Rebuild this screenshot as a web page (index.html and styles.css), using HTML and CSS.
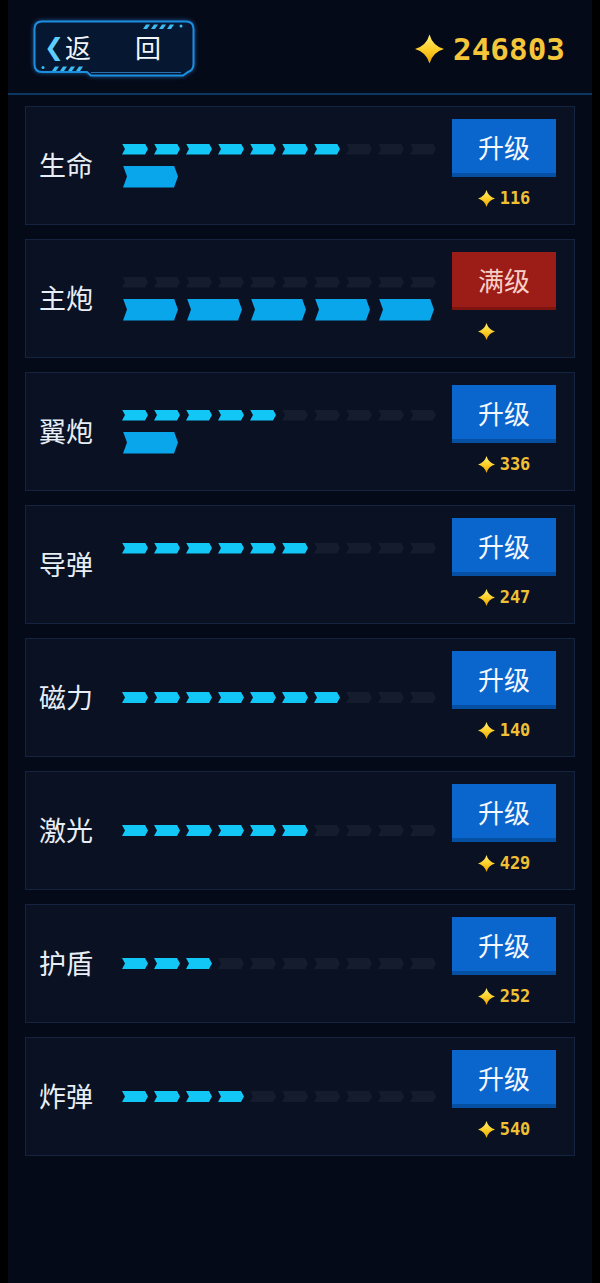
FILE: index.html
```html
<!DOCTYPE html>
<html lang="zh-CN">
  <head>
    <meta charset="UTF-8" />
    <meta name="viewport" content="width=device-width, initial-scale=1.0" />
    <title>强化</title>
    <link rel="stylesheet" href="styles.css">
  </head>
  <body>
    <svg class="defs" width="0" height="0">
      <defs>
        <linearGradient id="gold" x1="0" y1="0" x2="0" y2="1">
          <stop offset="0" stop-color="#fff07a" />
          <stop offset="0.5" stop-color="#ffd02a" />
          <stop offset="1" stop-color="#e9a300" />
        </linearGradient>
        <symbol id="star" viewBox="0 0 24 24">
          <path d="M12 0 Q14.6 9.4 24 12 Q14.6 14.6 12 24 Q9.4 14.6 0 12 Q9.4 9.4 12 0Z" fill="url(#gold)" />
        </symbol>
      </defs>
    </svg>

    <div class="screen">
      <header class="topbar">
        <a class="back-btn" href="#">
          <svg class="back-frame" viewBox="0 0 162 57">
            <path d="M9 1.5 H153 Q160.5 1.5 160.5 9 V44 Q160.5 50 155 52 L150 55.5 H58 L54 52 H9 Q1.5 52 1.5 44 V9 Q1.5 1.5 9 1.5 Z" fill="#061732" stroke="#1b8ee0" stroke-width="2" />
            <path d="M58 52.5 H148" stroke="#2a6fb0" stroke-width="1" />
            <path d="M110 9 l3 -4.5 h4 l-3 4.5z M118 9 l3 -4.5 h4 l-3 4.5z M126 9 l3 -4.5 h4 l-3 4.5z M134 9 l3 -4.5 h4 l-3 4.5z" fill="#3cbcf2" />
            <circle cx="148" cy="6" r="1.5" fill="#3cbcf2" />
            <path d="M19 51 l3 -4.5 h4 l-3 4.5z M27 51 l3 -4.5 h4 l-3 4.5z M35 51 l3 -4.5 h4 l-3 4.5z M43 51 l3 -4.5 h4 l-3 4.5z" fill="#3cbcf2" />
            <circle cx="10" cy="47.5" r="1.5" fill="#3cbcf2" />
          </svg>
          <span class="back-arrow">❮</span>
          <span class="back-text">返</span>
          <span class="back-text back-gap">回</span>
        </a>
        <div class="coins">
          <svg class="star-lg"><use href="#star" /></svg>
          <span>246803</span>
        </div>
      </header>

      <main class="upgrade-list">
        <section class="card">
          <div class="card-name">生命</div>
          <div class="bars">
            <div class="bar-row">
              <i class="seg on"></i><i class="seg on"></i><i class="seg on"></i><i class="seg on"></i><i class="seg on"></i><i class="seg on"></i><i class="seg on"></i><i class="seg"></i><i class="seg"></i><i class="seg"></i>
            </div>
            <div class="bar-row big-row">
              <i class="big-seg"></i>
            </div>
          </div>
          <div class="action">
            <button class="btn">升级</button>
            <div class="cost"><svg class="star-sm"><use href="#star" /></svg><span>116</span></div>
          </div>
        </section>

        <section class="card">
          <div class="card-name">主炮</div>
          <div class="bars">
            <div class="bar-row">
              <i class="seg"></i><i class="seg"></i><i class="seg"></i><i class="seg"></i><i class="seg"></i><i class="seg"></i><i class="seg"></i><i class="seg"></i><i class="seg"></i><i class="seg"></i>
            </div>
            <div class="bar-row big-row">
              <i class="big-seg"></i><i class="big-seg"></i><i class="big-seg"></i><i class="big-seg"></i><i class="big-seg"></i>
            </div>
          </div>
          <div class="action">
            <button class="btn btn-max">满级</button>
            <div class="cost"><svg class="star-sm"><use href="#star" /></svg><span class="cost-none"></span></div>
          </div>
        </section>

        <section class="card">
          <div class="card-name">翼炮</div>
          <div class="bars">
            <div class="bar-row">
              <i class="seg on"></i><i class="seg on"></i><i class="seg on"></i><i class="seg on"></i><i class="seg on"></i><i class="seg"></i><i class="seg"></i><i class="seg"></i><i class="seg"></i><i class="seg"></i>
            </div>
            <div class="bar-row big-row">
              <i class="big-seg"></i>
            </div>
          </div>
          <div class="action">
            <button class="btn">升级</button>
            <div class="cost"><svg class="star-sm"><use href="#star" /></svg><span>336</span></div>
          </div>
        </section>

        <section class="card">
          <div class="card-name">导弹</div>
          <div class="bars">
            <div class="bar-row">
              <i class="seg on"></i><i class="seg on"></i><i class="seg on"></i><i class="seg on"></i><i class="seg on"></i><i class="seg on"></i><i class="seg"></i><i class="seg"></i><i class="seg"></i><i class="seg"></i>
            </div>
            <div class="bar-row big-row"></div>
          </div>
          <div class="action">
            <button class="btn">升级</button>
            <div class="cost"><svg class="star-sm"><use href="#star" /></svg><span>247</span></div>
          </div>
        </section>

        <section class="card">
          <div class="card-name">磁力</div>
          <div class="bars">
            <div class="bar-row">
              <i class="seg on"></i><i class="seg on"></i><i class="seg on"></i><i class="seg on"></i><i class="seg on"></i><i class="seg on"></i><i class="seg on"></i><i class="seg"></i><i class="seg"></i><i class="seg"></i>
            </div>
          </div>
          <div class="action">
            <button class="btn">升级</button>
            <div class="cost"><svg class="star-sm"><use href="#star" /></svg><span>140</span></div>
          </div>
        </section>

        <section class="card">
          <div class="card-name">激光</div>
          <div class="bars">
            <div class="bar-row">
              <i class="seg on"></i><i class="seg on"></i><i class="seg on"></i><i class="seg on"></i><i class="seg on"></i><i class="seg on"></i><i class="seg"></i><i class="seg"></i><i class="seg"></i><i class="seg"></i>
            </div>
          </div>
          <div class="action">
            <button class="btn">升级</button>
            <div class="cost"><svg class="star-sm"><use href="#star" /></svg><span>429</span></div>
          </div>
        </section>

        <section class="card">
          <div class="card-name">护盾</div>
          <div class="bars">
            <div class="bar-row">
              <i class="seg on"></i><i class="seg on"></i><i class="seg on"></i><i class="seg"></i><i class="seg"></i><i class="seg"></i><i class="seg"></i><i class="seg"></i><i class="seg"></i><i class="seg"></i>
            </div>
          </div>
          <div class="action">
            <button class="btn">升级</button>
            <div class="cost"><svg class="star-sm"><use href="#star" /></svg><span>252</span></div>
          </div>
        </section>

        <section class="card">
          <div class="card-name">炸弹</div>
          <div class="bars">
            <div class="bar-row">
              <i class="seg on"></i><i class="seg on"></i><i class="seg on"></i><i class="seg on"></i><i class="seg"></i><i class="seg"></i><i class="seg"></i><i class="seg"></i><i class="seg"></i><i class="seg"></i>
            </div>
          </div>
          <div class="action">
            <button class="btn">升级</button>
            <div class="cost"><svg class="star-sm"><use href="#star" /></svg><span>540</span></div>
          </div>
        </section>
      </main>
    </div>
  </body>
</html>
```

FILE: styles.css
```css
html,
body {
  margin: 0;
  background: #000;
}
body {
  font-family: "Noto Sans CJK SC", "Noto Sans", sans-serif;
  color: #e8eef6;
}
.defs {
  position: absolute;
}
.screen {
  width: 584px;
  min-height: 1283px;
  margin-left: 8px;
  background: #050a19;
}

/* header */
.topbar {
  height: 95px;
  box-sizing: border-box;
  border-bottom: 2px solid #0c3662;
  padding: 20px 27px 0 25px;
  display: flex;
  justify-content: space-between;
  align-items: flex-start;
}
.back-btn {
  position: relative;
  width: 162px;
  height: 57px;
  box-sizing: border-box;
  padding: 0 0 4px 11px;
  display: flex;
  align-items: center;
  text-decoration: none;
  color: #f2f6fb;
}
.back-frame {
  position: absolute;
  left: 0;
  top: 0;
  width: 162px;
  height: 57px;
  filter: drop-shadow(0 0 2px rgba(40, 150, 240, 0.6));
}
.back-arrow,
.back-text {
  position: relative;
}
.back-arrow {
  font-family: "DejaVu Sans", sans-serif;
  font-weight: bold;
  font-size: 24px;
  line-height: 1;
  color: #5ccfff;
  width: 21px;
}
.back-text {
  font-size: 26px;
  line-height: 1;
}
.back-gap {
  margin-left: 44px;
}
.coins {
  height: 57px;
  display: flex;
  align-items: center;
  gap: 9px;
  font-family: "DejaVu Sans Mono", monospace;
  font-weight: bold;
  font-size: 31px;
  color: #f5c63a;
}
.star-lg {
  width: 29px;
  height: 30px;
}

/* list */
.upgrade-list {
  padding: 11px 17px 0;
  display: flex;
  flex-direction: column;
  gap: 14px;
}
.card {
  height: 119px;
  box-sizing: border-box;
  border: 1px solid #14233f;
  background: #0a1122;
  padding: 0 18px 0 13px;
  display: grid;
  grid-template-columns: 83px 1fr 104px;
  align-items: center;
}
.card-name {
  font-size: 27px;
  line-height: 1;
  padding-bottom: 2px;
}
.bars {
  display: flex;
  flex-direction: column;
  gap: 11px;
}
.bar-row {
  display: flex;
  gap: 6px;
}
.big-row {
  height: 22px;
  gap: 9px;
  padding-left: 1px;
}
.seg {
  width: 26px;
  height: 11px;
  background: #151c2d;
  clip-path: polygon(0 0, 23px 0, 26px 50%, 23px 100%, 0 100%, 3px 50%);
}
.seg.on {
  background: #12c6f6;
}
.big-seg {
  width: 55px;
  height: 22px;
  background: #0aa6ec;
  clip-path: polygon(0 0, 51px 0, 55px 50%, 51px 100%, 0 100%, 4px 50%);
}

/* button column */
.action {
  align-self: start;
  padding-top: 12px;
}
.btn {
  display: block;
  width: 104px;
  height: 58px;
  border: 0;
  margin: 0;
  padding: 0 0 4px;
  background: #0a66cc;
  box-shadow: inset 0 -4px 0 #0650a4;
  font-family: inherit;
  font-size: 26px;
  color: #f4f8ff;
}
.btn-max {
  background: #9c1c17;
  box-shadow: inset 0 -3px 0 #7e1410;
  color: #f6cfc6;
}
.cost {
  margin-top: 10px;
  height: 22px;
  display: flex;
  justify-content: center;
  align-items: center;
  gap: 5px;
  font-family: "DejaVu Sans Mono", monospace;
  font-size: 17px;
  font-weight: bold;
  color: #f0c034;
}
.star-sm {
  width: 17px;
  height: 17px;
}
.cost-none {
  width: 31px;
}
```
